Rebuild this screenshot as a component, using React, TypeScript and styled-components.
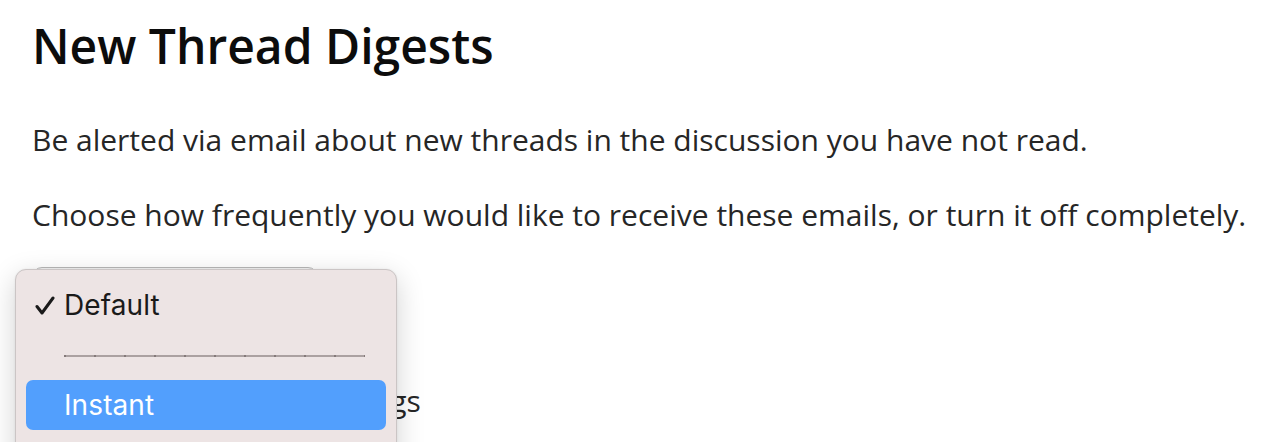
import React from "react";
import styled, { createGlobalStyle } from "styled-components";

const Global = createGlobalStyle`
  html, body { margin: 0; padding: 0; background: #ffffff; }
  body { font-family: "Open Sans", "Noto Sans", sans-serif; color: #242424; }
`;

const Page = styled.div`
  position: relative;
  width: 1274px;
  height: 442px;
  overflow: hidden;
  padding: 0 0 0 32px;
  box-sizing: border-box;
  background: #fff;
`;

const Title = styled.h1`
  margin: 13px 0 0 0;
  font-family: "Open Sans", sans-serif;
  font-weight: 600;
  font-size: 48px;
  line-height: 66px;
  color: #0c0c0c;
  letter-spacing: 0;
`;

const Para = styled.p`
  margin: 0;
  font-family: "Open Sans", sans-serif;
  font-size: 30px;
  line-height: 40px;
  color: #262626;
  white-space: nowrap;
`;

const Paras = styled.div`
  display: flex;
  flex-direction: column;
  gap: 35px;
  margin-top: 41px;
`;

const SelectBox = styled.div`
  margin-top: 32px;
  width: 286px;
  height: 50px;
  border: 1px solid #b8b8b8;
  border-radius: 10px;
  box-sizing: border-box;
  background: #f5f5f5;
`;

const Note = styled.p`
  margin: 64px 0 0 0;
  font-family: "Open Sans", sans-serif;
  font-size: 30px;
  line-height: 40px;
  color: #262626;
  white-space: nowrap;
`;

const Menu = styled.div`
  position: absolute;
  left: 15px;
  top: 269px;
  width: 382px;
  height: 200px;
  box-sizing: border-box;
  background: #ede4e4;
  border: 1px solid #cbc5c5;
  border-radius: 11px;
  box-shadow: 0 8px 28px rgba(0, 0, 0, 0.18), 0 0 2px rgba(0, 0, 0, 0.08);
  padding: 10px 10px 0 10px;
  display: flex;
  flex-direction: column;
  font-family: Inter, "Noto Sans", sans-serif;
`;

const Item = styled.div<{ $active?: boolean }>`
  display: flex;
  align-items: center;
  height: 50px;
  border-radius: 7px;
  padding-left: 9px;
  font-size: 28px;
  letter-spacing: 0.1px;
  color: ${(p) => (p.$active ? "#ffffff" : "#1a1a1a")};
  background: ${(p) => (p.$active ? "#529ffd" : "transparent")};
`;

const CheckSlot = styled.span`
  width: 29px;
  display: flex;
  align-items: center;
  justify-content: flex-start;
`;

const Separator = styled.div`
  margin: 25px 21px 23px 38px;
  height: 2px;
  background-color: #aba1a1;
  background-image: linear-gradient(
    to right,
    #857a7a 0,
    #857a7a 2px,
    transparent 2px,
    transparent 30px
  );
  background-size: 30px 2px;
  background-repeat: repeat-x;
  background-position: 30px 0;
`;

const Check = () => (
  <svg width="20" height="19" viewBox="0 0 20 19" fill="none">
    <path d="M2 10.5 L7 17 L18 2" stroke="#1a1a1a" strokeWidth="3" strokeLinecap="round" strokeLinejoin="round" />
  </svg>
);

export default function App() {
  return (
    <>
      <Global />
      <Page>
        <Title>New Thread Digests</Title>
        <Paras>
          <Para>Be alerted via email about new threads in the discussion you have not read.</Para>
          <Para>Choose how frequently you would like to receive these emails, or turn it off completely.</Para>
        </Paras>
        <SelectBox />
        <Note>Manage the default settings</Note>
        <Menu>
          <Item>
            <CheckSlot>
              <Check />
            </CheckSlot>
            Default
          </Item>
          <Separator />
          <Item $active>
            <CheckSlot />
            Instant
          </Item>
        </Menu>
      </Page>
    </>
  );
}
